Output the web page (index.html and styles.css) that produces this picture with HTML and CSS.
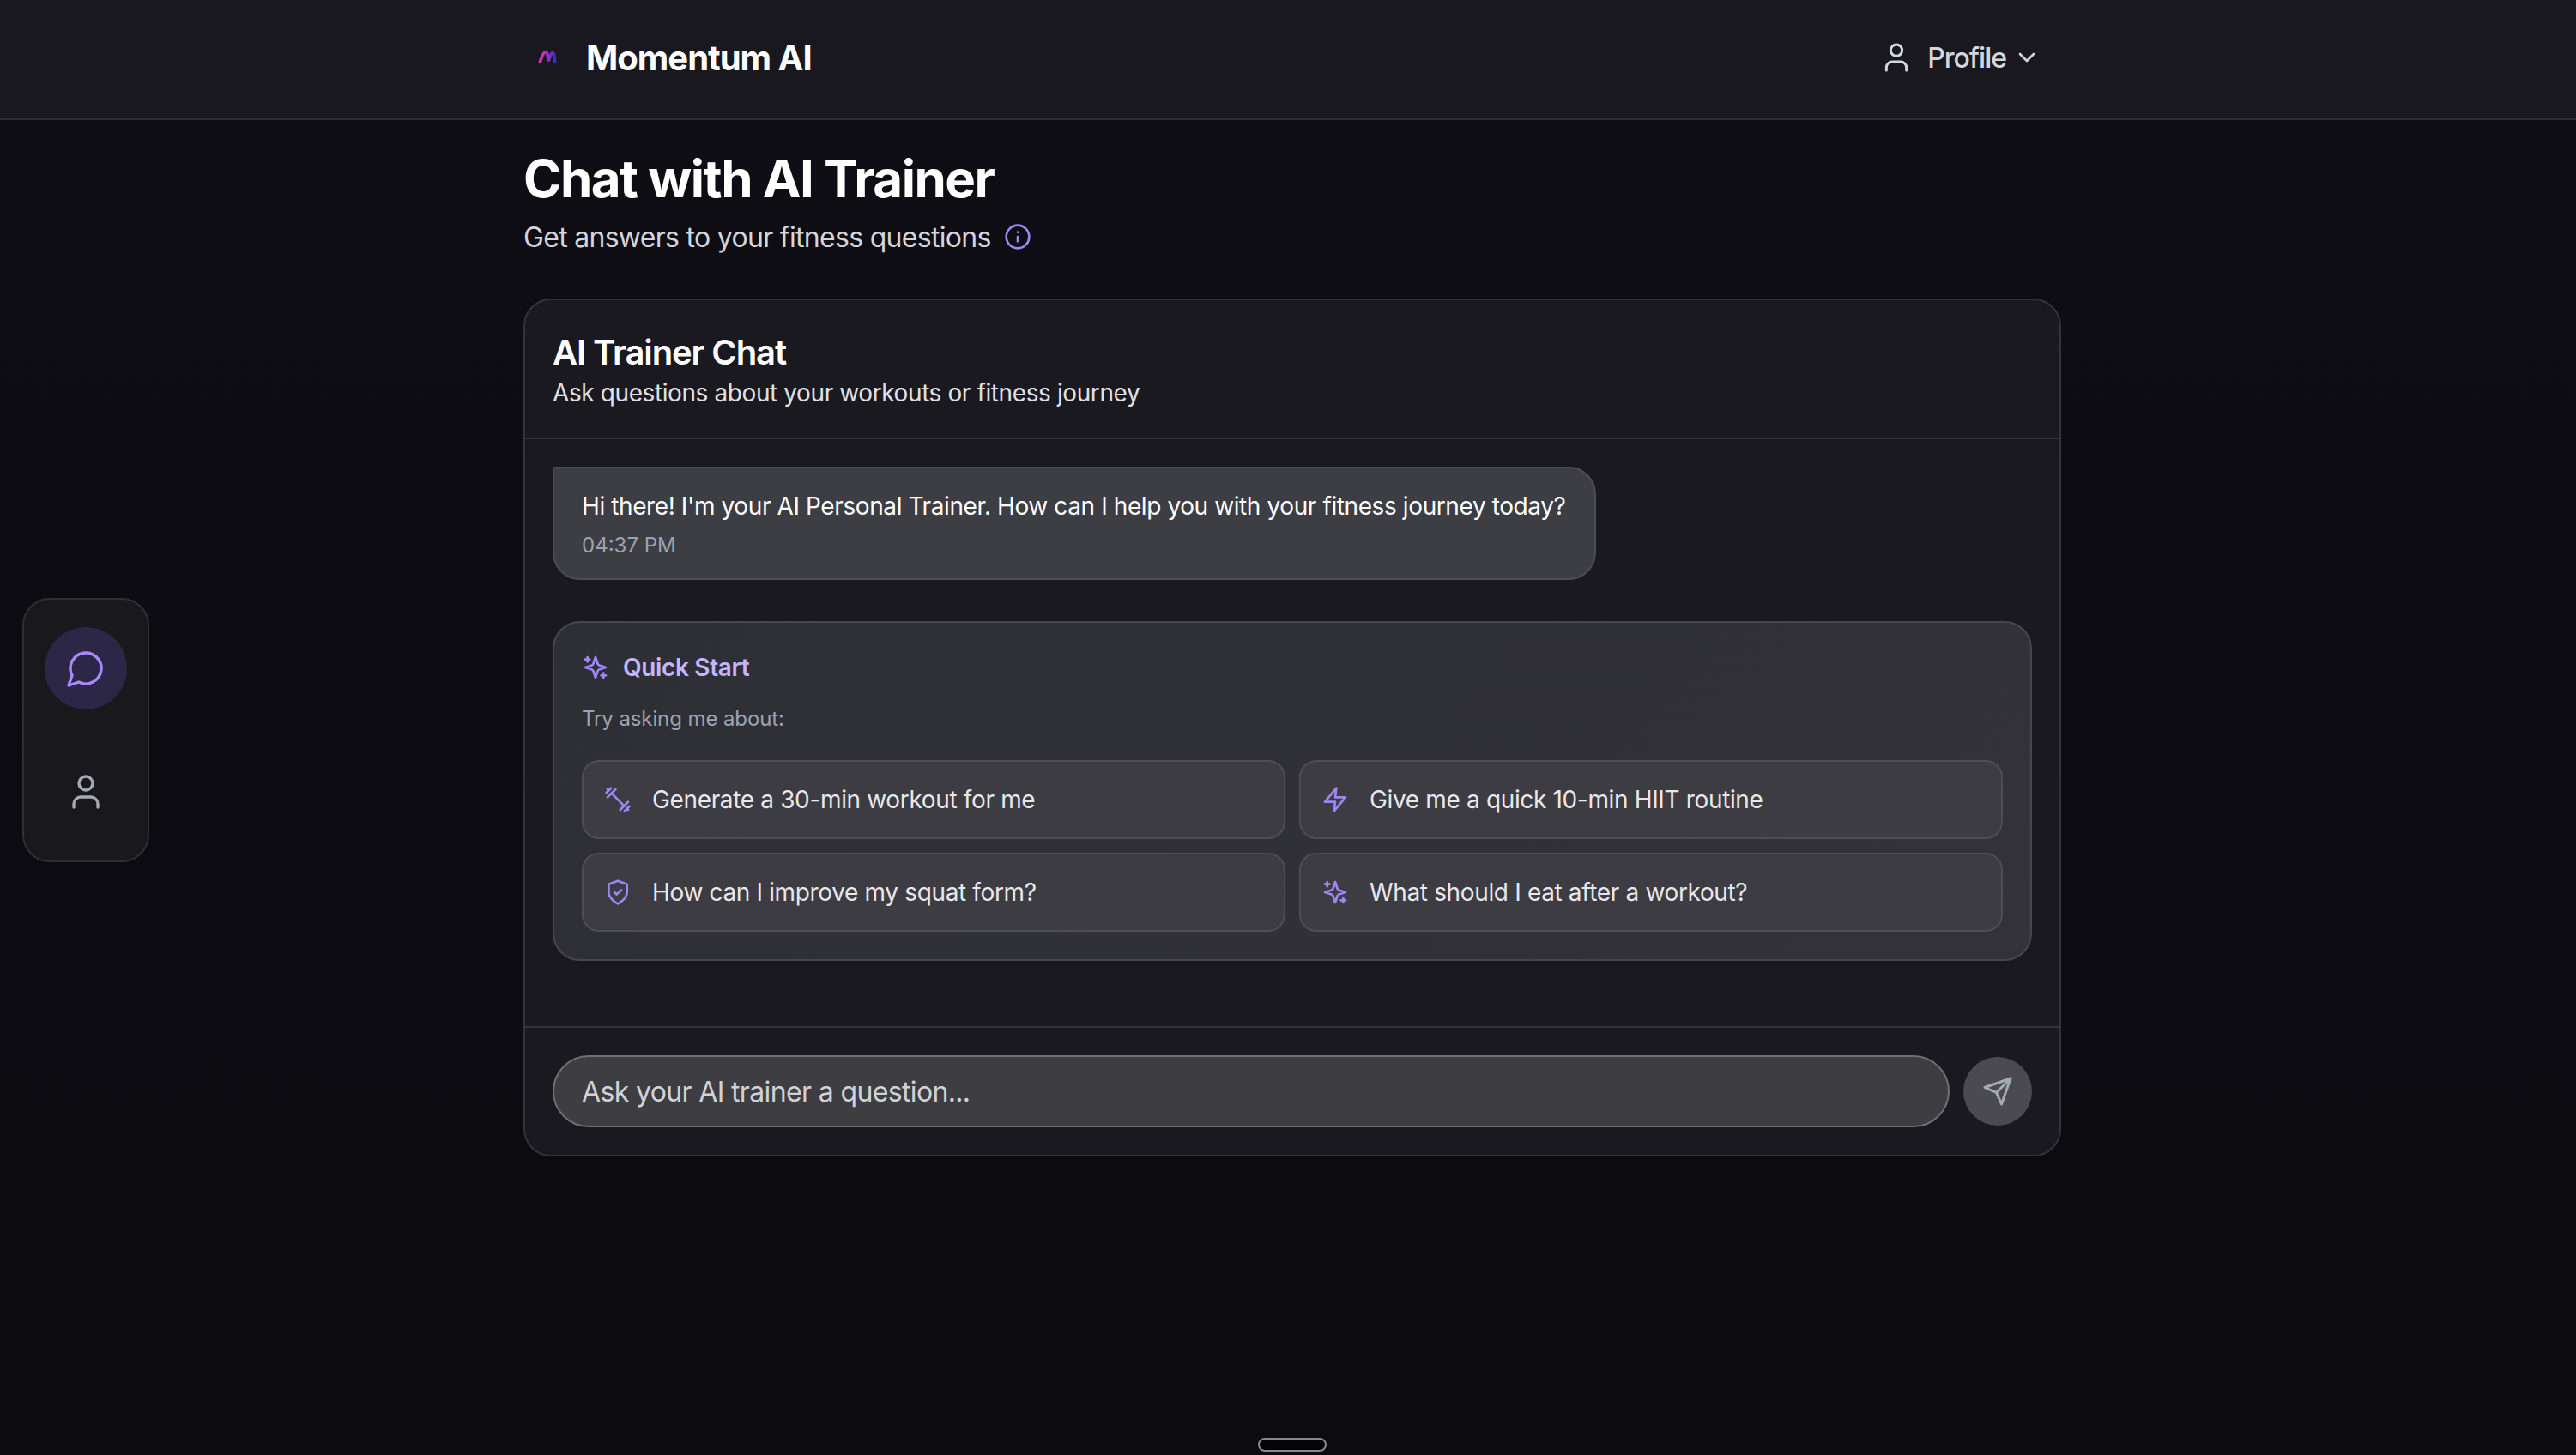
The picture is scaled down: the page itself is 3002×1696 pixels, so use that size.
FILE: index.html
```html
<!DOCTYPE html>
<html lang="en">
<head>
<meta charset="UTF-8">
<meta name="viewport" content="width=device-width, initial-scale=1.0">
<title>Momentum AI</title>
<link rel="stylesheet" href="styles.css">
</head>
<body>

    <div class="navbar">
        <div class="navbar-inner">
            <div class="navbar-logo">
                <span class="logo-box">
                    <svg width="56" height="56" viewBox="0 0 56 56" fill="none">
                        <defs>
                            <linearGradient id="logoGrad" x1="0" y1="0" x2="1" y2="0">
                                <stop offset="0" stop-color="#d9359f"/>
                                <stop offset="0.55" stop-color="#9a2fc0"/>
                                <stop offset="1" stop-color="#3a2fb8"/>
                            </linearGradient>
                        </defs>
                        <path d="M19.500 33 C21 28 23 22 26 21.500 C28 21 28.500 28 29.500 31 C31 27 32 23 34 22.500 C36 22.500 36.500 29 36.500 33" stroke="url(#logoGrad)" stroke-width="3.800" stroke-linecap="round" stroke-linejoin="round"/>
                    </svg>
                </span>
                <span class="logo-text">Momentum AI</span>
            </div>
            <div class="navbar-profile">
                <svg class="icon icon-40" viewBox="0 0 24 24"><path d="M19 21v-2a4 4 0 0 0-4-4H9a4 4 0 0 0-4 4v2"/><circle cx="12" cy="7" r="4"/></svg>
                <span>Profile</span>
                <svg class="icon icon-chevron" viewBox="0 0 24 24"><path d="m6 9 6 6 6-6"/></svg>
            </div>
        </div>
    </div>

    <div class="side-dock">
        <div class="dock-btn dock-active">
            <svg class="icon icon-48" viewBox="0 0 24 24"><path d="M7.900 20A9 9 0 1 0 4 16.100L2 22Z"/></svg>
        </div>
        <div class="dock-btn">
            <svg class="icon icon-48" viewBox="0 0 24 24"><path d="M19 21v-2a4 4 0 0 0-4-4H9a4 4 0 0 0-4 4v2"/><circle cx="12" cy="7" r="4"/></svg>
        </div>
    </div>

    <div class="container">
        <h1>Chat with AI Trainer</h1>
        <div class="subtitle">
            <span>Get answers to your fitness questions</span>
            <svg class="icon icon-32 purple" viewBox="0 0 24 24"><circle cx="12" cy="12" r="10"/><path d="M12 16v-4"/><path d="M12 8h.01"/></svg>
        </div>

        <div class="chat-card">
            <div class="chat-header">
                <h2>AI Trainer Chat</h2>
                <p>Ask questions about your workouts or fitness journey</p>
            </div>

            <div class="chat-body">
                <div class="bubble">
                    <p>Hi there! I'm your AI Personal Trainer. How can I help you with your fitness journey today?</p>
                    <span class="bubble-time">04:37 PM</span>
                </div>

                <div class="quick-start">
                    <div class="quick-title">
                        <svg class="icon icon-32 purple" viewBox="0 0 24 24"><path d="m12 3-1.912 5.813a2 2 0 0 1-1.275 1.275L3 12l5.813 1.912a2 2 0 0 1 1.275 1.275L12 21l1.912-5.813a2 2 0 0 1 1.275-1.275L21 12l-5.813-1.912a2 2 0 0 1-1.275-1.275L12 3Z"/><path d="M5 3v4"/><path d="M19 17v4"/><path d="M3 5h4"/><path d="M17 19h4"/></svg>
                        <span>Quick Start</span>
                    </div>
                    <p class="quick-hint">Try asking me about:</p>
                    <div class="quick-grid">
                        <div class="quick-btn">
                            <svg class="icon icon-32 purple" viewBox="0 0 24 24"><path d="m6.500 6.500 11 11"/><path d="m21 21-1-1"/><path d="m3 3 1 1"/><path d="m18 22 4-4"/><path d="m2 6 4-4"/><path d="m3 10 7-7"/><path d="m14 21 7-7"/></svg>
                            <span>Generate a 30-min workout for me</span>
                        </div>
                        <div class="quick-btn">
                            <svg class="icon icon-32 purple" viewBox="0 0 24 24"><path d="M13 2 3 14h9l-1 8 10-12h-9l1-8z"/></svg>
                            <span>Give me a quick 10-min HIIT routine</span>
                        </div>
                        <div class="quick-btn">
                            <svg class="icon icon-32 purple" viewBox="0 0 24 24"><path d="M12 22s8-4 8-10V5l-8-3-8 3v7c0 6 8 10 8 10"/><path d="m9 12 2 2 4-4"/></svg>
                            <span>How can I improve my squat form?</span>
                        </div>
                        <div class="quick-btn">
                            <svg class="icon icon-32 purple" viewBox="0 0 24 24"><path d="m12 3-1.912 5.813a2 2 0 0 1-1.275 1.275L3 12l5.813 1.912a2 2 0 0 1 1.275 1.275L12 21l1.912-5.813a2 2 0 0 1 1.275-1.275L21 12l-5.813-1.912a2 2 0 0 1-1.275-1.275L12 3Z"/><path d="M5 3v4"/><path d="M19 17v4"/><path d="M3 5h4"/><path d="M17 19h4"/></svg>
                            <span>What should I eat after a workout?</span>
                        </div>
                    </div>
                </div>
            </div>

            <div class="chat-footer">
                <input class="chat-input" type="text" placeholder="Ask your AI trainer a question...">
                <div class="send-btn">
                    <svg class="icon icon-36" viewBox="0 0 24 24"><path d="m22 2-7 20-4-9-9-4Z"/><path d="M22 2 11 13"/></svg>
                </div>
            </div>
        </div>
    </div>

    <div class="drag-handle"></div>

</body>
</html>
```

FILE: styles.css
```css
html, body {
    height: 100%;
}

body {
    font-family: Inter, "Liberation Sans", sans-serif;
    background: linear-gradient(180deg, #0e0e14 0%, #0b0b11 60%, #0b0b10 100%);
    color: #fff;
    margin: 0;
    padding: 0;
    overflow: hidden;
}

h1, h2, p {
    margin: 0;
}

.icon {
    fill: none;
    stroke: currentColor;
    stroke-width: 2;
    stroke-linecap: round;
    stroke-linejoin: round;
    flex-shrink: 0;
}

.icon-32 { width: 32px; height: 32px; }
.icon-36 { width: 36px; height: 36px; }
.icon-40 { width: 40px; height: 40px; stroke-width: 1.800; }
.icon-48 { width: 48px; height: 48px; stroke-width: 1.700; }
.icon-chevron { width: 32px; height: 32px; }

.purple {
    color: #9f86f5;
}

/* top bar */
.navbar {
    background-color: #18181e;
    border-bottom: 2px solid #2c2c32;
    height: 140px;
    box-sizing: border-box;
    padding-left: 10px;
    padding-bottom: 4px;
}

.navbar-inner {
    width: 1792px;
    height: 100%;
    margin: 0 auto;
    display: flex;
    align-items: center;
    justify-content: space-between;
}

.navbar-logo {
    display: flex;
    align-items: center;
    gap: 17px;
}

.logo-box {
    display: flex;
    width: 56px;
    height: 56px;
}

.logo-text {
    font-size: 40px;
    font-weight: 700;
    letter-spacing: -1px;
}

.navbar-profile {
    display: flex;
    align-items: center;
    gap: 16px;
    padding-right: 24px;
    color: #d4d6db;
    font-size: 32px;
    font-weight: 500;
    letter-spacing: -1px;
}

.navbar-profile .icon-chevron {
    margin-left: -8px;
}

/* left floating dock */
.side-dock {
    position: absolute;
    left: 26px;
    top: 697px;
    box-sizing: border-box;
    width: 148px;
    padding: 32px 24px;
    display: flex;
    flex-direction: column;
    gap: 48px;
    background-color: #18181d;
    border: 2px solid #2f2f35;
    border-radius: 32px;
}

.dock-btn {
    width: 96px;
    height: 96px;
    border-radius: 50%;
    display: flex;
    align-items: center;
    justify-content: center;
    color: #a4a9b3;
}

.dock-active {
    background-color: #2d2747;
    color: #a78bfa;
}

/* page content */
.container {
    width: 1792px;
    margin: 0 auto;
    padding-left: 10px;
    padding-top: 32px;
}

h1 {
    font-size: 60px;
    line-height: 72px;
    font-weight: 700;
    letter-spacing: -1.500px;
}

.subtitle {
    display: flex;
    align-items: center;
    gap: 15px;
    margin-top: 8px;
    height: 48px;
    font-size: 32px;
    letter-spacing: -0.700px;
    color: #d4d6db;
}

.chat-card {
    margin-top: 48px;
    height: 1000px;
    box-sizing: border-box;
    display: flex;
    flex-direction: column;
    background-color: #19191f;
    border: 2px solid #33333a;
    border-radius: 32px;
}

.chat-header {
    box-sizing: border-box;
    height: 162px;
    padding: 33px 32px 0;
    border-bottom: 2px solid #33333a;
}

.chat-header h2 {
    font-size: 40px;
    line-height: 56px;
    font-weight: 600;
    letter-spacing: -1.100px;
}

.chat-header p {
    font-size: 28px;
    line-height: 36px;
    margin-top: 1px;
    letter-spacing: -0.400px;
    color: #e0e1e5;
}

.chat-body {
    flex: 1;
    padding: 32px 32px 0;
}

.bubble {
    box-sizing: border-box;
    width: 1216px;
    height: 132px;
    padding: 24px 32px 0;
    background-color: #3d3d44;
    border: 2px solid #4c4c53;
    border-radius: 4px 32px 32px 32px;
}

.bubble p {
    font-size: 28px;
    line-height: 40px;
    letter-spacing: -0.400px;
    color: #fff;
    white-space: nowrap;
}

.bubble-time {
    display: block;
    margin-top: 10px;
    font-size: 24px;
    line-height: 32px;
    color: #9ca3af;
}

.quick-start {
    margin-top: 48px;
    box-sizing: border-box;
    height: 396px;
    padding: 32px;
    background: linear-gradient(135deg, #2e2e35, #323238);
    border: 2px solid #46464c;
    border-radius: 32px;
}

.quick-title {
    display: flex;
    align-items: center;
    gap: 16px;
    height: 40px;
    font-size: 28px;
    font-weight: 600;
    letter-spacing: -0.350px;
    color: #c4b5fd;
}

.quick-hint {
    margin-top: 24px;
    font-size: 24px;
    line-height: 32px;
    letter-spacing: -0.100px;
    color: #9ca3af;
}

.quick-grid {
    margin-top: 32px;
    display: grid;
    grid-template-columns: 1fr 1fr;
    gap: 16px;
}

.quick-btn {
    box-sizing: border-box;
    height: 92px;
    display: flex;
    align-items: center;
    gap: 24px;
    padding: 0 24px;
    background-color: #3c3c42;
    border: 2px solid #4d4d53;
    border-radius: 20px;
    font-size: 28px;
    letter-spacing: -0.350px;
    color: #e7e7ec;
}

.chat-footer {
    box-sizing: border-box;
    height: 150px;
    padding: 32px;
    display: flex;
    align-items: center;
    gap: 16px;
    border-top: 2px solid #33333a;
}

.chat-input {
    flex: 1;
    min-width: 0;
    height: 84px;
    box-sizing: border-box;
    padding: 0 32px;
    background-color: #3d3d42;
    border: 2px solid #6f6f74;
    border-radius: 42px;
    font-family: inherit;
    font-size: 32px;
    letter-spacing: -0.640px;
    color: #fff;
}

.chat-input::placeholder {
    color: #d0d2d6;
    opacity: 1;
}

.send-btn {
    width: 80px;
    height: 80px;
    flex-shrink: 0;
    border-radius: 50%;
    background-color: #4a4a50;
    color: #a4abb6;
    display: flex;
    align-items: center;
    justify-content: center;
}

/* little bar at the bottom of the window */
.drag-handle {
    position: absolute;
    left: 1466px;
    top: 1676px;
    box-sizing: border-box;
    width: 80px;
    height: 16px;
    background-color: #040407;
    border: 2px solid #8a8a8c;
    border-radius: 8px;
}
```
